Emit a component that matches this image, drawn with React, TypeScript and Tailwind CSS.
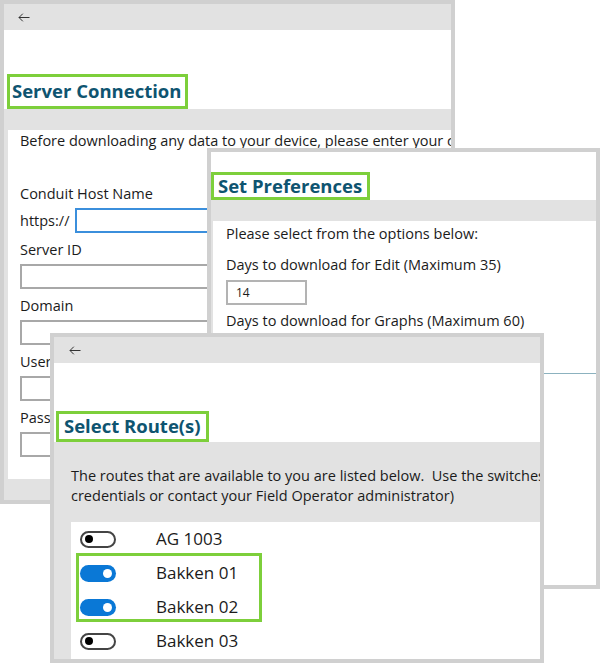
import React from "react"

const font = { fontFamily: "'Open Sans', 'Noto Sans', 'Liberation Sans', sans-serif" }

function BackArrow() {
  return (
    <svg width="12" height="9" viewBox="0 0 12 9" fill="none" stroke="#333" strokeWidth="1">
      <path d="M11.5 4.5H1" />
      <path d="M4.8 0.7L1 4.5l3.8 3.8" />
    </svg>
  )
}

function Title({ text, className }: { text: string; className: string }) {
  return (
    <div className={`inline-flex items-center border-[3px] border-[#7dcf3b] bg-white ${className}`}>
      <span className="text-[18.5px] font-bold leading-none text-[#0e5470] whitespace-nowrap">{text}</span>
    </div>
  )
}

function Field({ label, input = "w-[420px]" }: { label: string; input?: string }) {
  return (
    <>
      <div className="mt-[7px] h-[20px] leading-[20px] whitespace-nowrap">{label}</div>
      <div className={`mt-[4px] h-[25px] border-2 border-[#a8a8a8] bg-white ${input}`} />
    </>
  )
}

function Toggle({ on }: { on: boolean }) {
  return on ? (
    <div className="flex h-[17px] w-[36px] items-center justify-end rounded-full bg-[#0a78d6] pr-[4px]">
      <div className="h-[9px] w-[9px] rounded-full bg-white" />
    </div>
  ) : (
    <div className="flex h-[17px] w-[36px] items-center rounded-full border-2 border-[#444] bg-white pl-[3px]">
      <div className="h-[8px] w-[8px] rounded-full bg-black" />
    </div>
  )
}

const routes = [
  { name: "AG 1003", on: false },
  { name: "Bakken 01", on: true },
  { name: "Bakken 02", on: true },
  { name: "Bakken 03", on: false },
]

export default function App() {
  return (
    <div className="relative h-[663px] w-[600px] overflow-hidden bg-white text-[14.5px] text-[#1b1b1b]" style={font}>
      {/* Server Connection window */}
      <div className="absolute left-0 top-0 flex h-[504px] w-[455px] flex-col overflow-hidden border-4 border-[#d0d0d0] bg-[#e2e2e2]">
        <div className="flex h-[26px] shrink-0 items-center pl-[14px]">
          <BackArrow />
        </div>
        <div className="h-[79px] shrink-0 bg-white pl-[3px] pt-[44px]">
          <Title text="Server Connection" className="h-[35px] pl-[2px] pr-[4px]" />
        </div>
        <div className="h-[21px] shrink-0" />
        <div className="ml-[4px] flex h-[349px] shrink-0 flex-col bg-white pl-[12px] pt-[1px]">
          <div className="h-[20px] leading-[20px] whitespace-nowrap">
            Before downloading any data to your device, please enter your credentials below.
          </div>
          <div className="mt-[33px] h-[20px] leading-[20px] whitespace-nowrap">Conduit Host Name</div>
          <div className="mt-[4px] flex h-[25px] items-center">
            <span className="w-[55px] whitespace-nowrap">https://</span>
            <div className="h-[25px] w-[360px] border-2 border-[#3b8fdc] bg-white" />
          </div>
          <Field label="Server ID" />
          <Field label="Domain" />
          <Field label="User Name" />
          <Field label="Password" />
        </div>
      </div>

      {/* Set Preferences window */}
      <div className="absolute left-[207px] top-[148px] flex h-[441px] w-[393px] flex-col overflow-hidden border-4 border-[#d0d0d0] bg-[#e2e2e2]">
        <div className="h-[48px] shrink-0 bg-white pt-[20px]">
          <Title text="Set Preferences" className="h-[28px] pl-[4px] pr-[5px]" />
        </div>
        <div className="h-[21px] shrink-0" />
        <div className="ml-[2px] flex flex-1 flex-col bg-white pl-[13px] pt-[3px]">
          <div className="h-[20px] leading-[20px] whitespace-nowrap">Please select from the options below:</div>
          <div className="mt-[11px] h-[20px] leading-[20px] whitespace-nowrap">Days to download for Edit (Maximum 35)</div>
          <div className="mt-[5px] flex h-[25px] w-[81px] items-center border-2 border-[#b3b3b3] pl-[8px] text-[12px]">14</div>
          <div className="mt-[6px] h-[20px] leading-[20px] whitespace-nowrap">Days to download for Graphs (Maximum 60)</div>
          <div className="mt-[5px] flex h-[25px] w-[81px] items-center border-2 border-[#b3b3b3] pl-[8px] text-[12px]">30</div>
          <div className="-ml-[15px] mt-[12px] h-px bg-[#8cb2bf]" />
        </div>
      </div>

      {/* Select Route(s) window */}
      <div className="absolute left-[50px] top-[333px] flex h-[330px] w-[494px] flex-col overflow-hidden border-4 border-[#d0d0d0] bg-[#e2e2e2]">
        <div className="flex h-[26px] shrink-0 items-center pl-[15px]">
          <BackArrow />
        </div>
        <div className="h-[79px] shrink-0 bg-white pl-[2px] pt-[48px]">
          <Title text="Select Route(s)" className="h-[31px] pl-[5px] pr-[5px]" />
        </div>
        <div className="h-[80px] shrink-0 pl-[17px] pt-[24px]">
          <div className="h-[20px] leading-[20px] whitespace-pre">
            The routes that are available to you are listed below.  Use the switches to select routes to download.
          </div>
          <div className="h-[20px] leading-[20px] whitespace-nowrap">
            credentials or contact your Field Operator administrator)
          </div>
        </div>
        <div className="relative ml-[17px] flex flex-1 flex-col bg-white">
          {routes.map((r) => (
            <div key={r.name} className="flex h-[34px] shrink-0 items-center pl-[9px]">
              <Toggle on={r.on} />
              <span className="ml-[40px] text-[17px] whitespace-nowrap">{r.name}</span>
            </div>
          ))}
          <div className="absolute left-[5px] top-[31px] h-[69px] w-[186px] border-[3px] border-[#7dcf3b]" />
        </div>
      </div>
    </div>
  )
}
